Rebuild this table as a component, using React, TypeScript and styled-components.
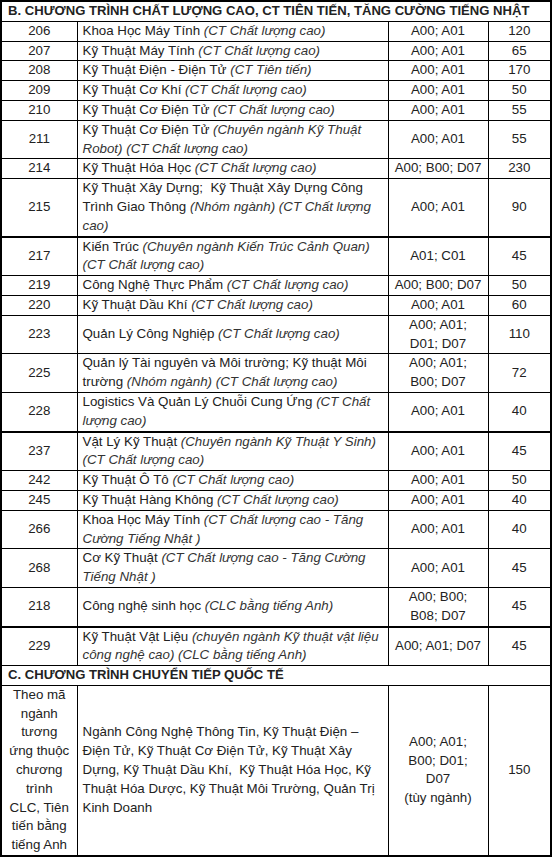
import React from "react";
import styled, { createGlobalStyle } from "styled-components";

const GlobalStyle = createGlobalStyle`
  body {
    margin: 0;
    background: #ffffff;
    font-family: "Liberation Sans", Arial, sans-serif;
  }
`;

const Table = styled.table`
  width: 550px;
  table-layout: fixed;
  border-collapse: collapse;
  border: 2px solid #000;
  font-size: 13.33px;
  line-height: 18.8px;
  color: #222;
`;

const Row = styled.tr<{ $thick?: boolean }>`
  & > td {
    border-top: ${(p) => (p.$thick ? "2px" : "1px")} solid #000;
  }
`;

const Cell = styled.td<{ $align?: "left" | "center" }>`
  border: 1px solid #000;
  padding: 0 5px;
  vertical-align: middle;
  text-align: ${(p) => p.$align || "center"};
`;

const SectionCell = styled.td`
  border: 1px solid #000;
  padding: 0 6px;
  font-size: 13.1px;
  font-weight: bold;
  text-align: left;
`;

const Note = styled.em`
  font-style: italic;
  color: #333;
`;

type Item = {
  code: string;
  name: string;
  note?: string;
  combo: string[];
  quota: string;
  thick?: boolean;
};

const itemsB: Item[] = [
  { code: "206", name: "Khoa Học Máy Tính", note: "(CT Chất lượng cao)", combo: ["A00; A01"], quota: "120" },
  { code: "207", name: "Kỹ Thuật Máy Tính", note: "(CT Chất lượng cao)", combo: ["A00; A01"], quota: "65" },
  { code: "208", name: "Kỹ Thuật Điện - Điện Tử", note: "(CT Tiên tiến)", combo: ["A00; A01"], quota: "170" },
  { code: "209", name: "Kỹ Thuật Cơ Khí", note: "(CT Chất lượng cao)", combo: ["A00; A01"], quota: "50" },
  { code: "210", name: "Kỹ Thuật Cơ Điện Tử", note: "(CT Chất lượng cao)", combo: ["A00; A01"], quota: "55" },
  {
    code: "211",
    name: "Kỹ Thuật Cơ Điện Tử",
    note: "(Chuyên ngành Kỹ Thuật Robot) (CT Chất lượng cao)",
    combo: ["A00; A01"],
    quota: "55",
  },
  { code: "214", name: "Kỹ Thuật Hóa Học", note: "(CT Chất lượng cao)", combo: ["A00; B00; D07"], quota: "230" },
  {
    code: "215",
    name: "Kỹ Thuật Xây Dựng;\u00a0 Kỹ Thuật Xây Dựng Công Trình Giao Thông",
    note: "(Nhóm ngành) (CT Chất lượng cao)",
    combo: ["A00; A01"],
    quota: "90",
  },
  {
    code: "217",
    name: "Kiến Trúc",
    note: "(Chuyên ngành Kiến Trúc Cảnh Quan) (CT Chất lượng cao)",
    combo: ["A01; C01"],
    quota: "45",
    thick: true,
  },
  { code: "219", name: "Công Nghệ Thực Phẩm", note: "(CT Chất lượng cao)", combo: ["A00; B00; D07"], quota: "50" },
  { code: "220", name: "Kỹ Thuật Dầu Khí", note: "(CT Chất lượng cao)", combo: ["A00; A01"], quota: "60" },
  {
    code: "223",
    name: "Quản Lý Công Nghiệp",
    note: "(CT Chất lượng cao)",
    combo: ["A00; A01;", "D01; D07"],
    quota: "110",
  },
  {
    code: "225",
    name: "Quản lý Tài nguyên và Môi trường; Kỹ thuật Môi trường",
    note: "(Nhóm ngành) (CT Chất lượng cao)",
    combo: ["A00; A01;", "B00; D07"],
    quota: "72",
  },
  {
    code: "228",
    name: "Logistics Và Quản Lý Chuỗi Cung Ứng",
    note: "(CT Chất lượng cao)",
    combo: ["A00; A01"],
    quota: "40",
  },
  {
    code: "237",
    name: "Vật Lý Kỹ Thuật",
    note: "(Chuyên ngành Kỹ Thuật Y Sinh) (CT Chất lượng cao)",
    combo: ["A00; A01"],
    quota: "45",
    thick: true,
  },
  { code: "242", name: "Kỹ Thuật Ô Tô", note: "(CT Chất lượng cao)", combo: ["A00; A01"], quota: "50" },
  { code: "245", name: "Kỹ Thuật Hàng Không", note: "(CT Chất lượng cao)", combo: ["A00; A01"], quota: "40" },
  {
    code: "266",
    name: "Khoa Học Máy Tính",
    note: "(CT Chất lượng cao - Tăng Cường Tiếng Nhật )",
    combo: ["A00; A01"],
    quota: "40",
  },
  {
    code: "268",
    name: "Cơ Kỹ Thuật",
    note: "(CT Chất lượng cao - Tăng Cường Tiếng Nhật )",
    combo: ["A00; A01"],
    quota: "45",
  },
  {
    code: "218",
    name: "Công nghệ sinh học",
    note: "(CLC bằng tiếng Anh)",
    combo: ["A00; B00;", "B08; D07"],
    quota: "45",
  },
  {
    code: "229",
    name: "Kỹ Thuật Vật Liệu",
    note: "(chuyên ngành Kỹ thuật vật liệu công nghệ cao) (CLC bằng tiếng Anh)",
    combo: ["A00; A01; D07"],
    quota: "45",
    thick: true,
  },
];

const Lines = ({ lines }: { lines: string[] }) => (
  <>
    {lines.map((line, i) => (
      <React.Fragment key={i}>
        {i > 0 && <br />}
        {line}
      </React.Fragment>
    ))}
  </>
);

const App = () => {
  return (
    <>
      <GlobalStyle />
      <Table>
        <colgroup>
          <col style={{ width: 76 }} />
          <col style={{ width: 311 }} />
          <col style={{ width: 100 }} />
          <col style={{ width: 63 }} />
        </colgroup>
        <tbody>
          <tr>
            <SectionCell colSpan={4}>
              B. CHƯƠNG TRÌNH CHẤT LƯỢNG CAO, CT TIÊN TIẾN, TĂNG CƯỜNG TIẾNG NHẬT
            </SectionCell>
          </tr>
          {itemsB.map(({ code, name, note, combo, quota, thick }) => (
            <Row key={code} $thick={thick}>
              <Cell>{code}</Cell>
              <Cell $align="left">
                {name} {note && <Note>{note}</Note>}
              </Cell>
              <Cell>
                <Lines lines={combo} />
              </Cell>
              <Cell>{quota}</Cell>
            </Row>
          ))}
          <tr>
            <SectionCell colSpan={4}>C. CHƯƠNG TRÌNH CHUYỂN TIẾP QUỐC TẾ</SectionCell>
          </tr>
          <Row>
            <Cell>
              <Lines
                lines={[
                  "Theo mã",
                  "ngành",
                  "tương",
                  "ứng thuộc",
                  "chương",
                  "trình",
                  "CLC, Tiên",
                  "tiến bằng",
                  "tiếng Anh",
                ]}
              />
            </Cell>
            <Cell $align="left">
              <Lines
                lines={[
                  "Ngành Công Nghệ Thông Tin, Kỹ Thuật Điện –",
                  "Điện Tử, Kỹ Thuật Cơ Điện Tử, Kỹ Thuật Xây",
                  "Dựng, Kỹ Thuật Dầu Khí,\u00a0 Kỹ Thuật Hóa Học, Kỹ",
                  "Thuật Hóa Dược, Kỹ Thuật Môi Trường, Quản Trị",
                  "Kinh Doanh",
                ]}
              />
            </Cell>
            <Cell>
              <Lines lines={["A00; A01;", "B00; D01;", "D07", "(tùy ngành)"]} />
            </Cell>
            <Cell>150</Cell>
          </Row>
        </tbody>
      </Table>
    </>
  );
};

export default App;
